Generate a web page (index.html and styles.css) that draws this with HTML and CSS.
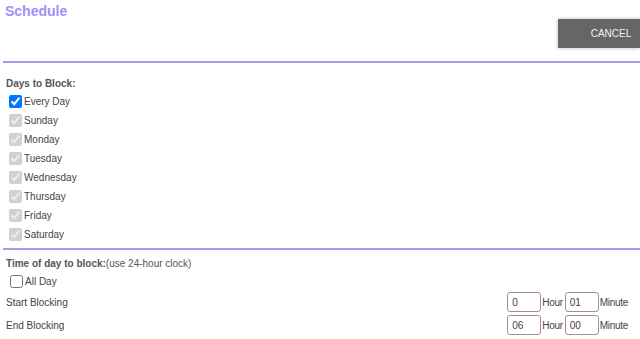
FILE: index.html
```html
<!DOCTYPE html>
<html>
<head>
<meta charset="utf-8">
<link rel="stylesheet" href="styles.css">
</head>
<body>
<div class="page">
  <div class="header">
    <h1 class="title">Schedule</h1>
    <div class="actions"><button class="cancel">CANCEL</button></div>
  </div>
  <div class="days">
    <div class="heading">Days to Block:</div>
    <label class="row"><input type="checkbox" checked><span>Every Day</span></label>
    <label class="row"><input type="checkbox" checked disabled><span>Sunday</span></label>
    <label class="row"><input type="checkbox" checked disabled><span>Monday</span></label>
    <label class="row"><input type="checkbox" checked disabled><span>Tuesday</span></label>
    <label class="row"><input type="checkbox" checked disabled><span>Wednesday</span></label>
    <label class="row"><input type="checkbox" checked disabled><span>Thursday</span></label>
    <label class="row"><input type="checkbox" checked disabled><span>Friday</span></label>
    <label class="row"><input type="checkbox" checked disabled><span>Saturday</span></label>
  </div>
  <div class="time">
    <div class="heading">Time of day to block:<span class="note">(use 24-hour clock)</span></div>
    <label class="row allday"><input type="checkbox"><span>All Day</span></label>
    <div class="trow">
      <span class="tlabel">Start Blocking</span>
      <span class="tinputs"><input class="tin" type="text" value="0"><span class="unit">Hour</span><input class="tin" type="text" value="01"><span class="unit last">Minute</span></span>
    </div>
    <div class="trow">
      <span class="tlabel">End Blocking</span>
      <span class="tinputs"><input class="tin" type="text" value="06"><span class="unit">Hour</span><input class="tin" type="text" value="00"><span class="unit last">Minute</span></span>
    </div>
  </div>
</div>
</body>
</html>
```
FILE: styles.css
```css
html, body {
  margin: 0;
  padding: 0;
  background: #fff;
}
body {
  font-family: "Liberation Sans", Arial, sans-serif;
  font-size: 10px;
  color: #444;
}
.page {
  padding-left: 3px;
  overflow: hidden;
}
.header {
  padding-top: 3px;
  padding-bottom: 13px;
  border-bottom: 2px solid #a39cf3;
}
.title {
  margin: 0;
  padding-left: 2px;
  font-size: 14px;
  line-height: 16px;
  font-weight: bold;
  color: #a090fc;
}
.actions {
  display: flex;
  justify-content: flex-end;
}
.cancel {
  height: 29px;
  width: 82px;
  margin: 0;
  border: none;
  background: #666;
  color: #f2f2f2;
  font-family: "Liberation Sans", Arial, sans-serif;
  font-size: 10px;
  padding: 0 0 0 24px;
  box-shadow: 0 0 4px rgba(0,0,0,0.28);
}
.heading {
  font-weight: bold;
  line-height: 13px;
  color: #555;
  padding-left: 3px;
}
.note {
  font-weight: normal;
}
.days {
  padding-top: 14px;
  padding-bottom: 4px;
  border-bottom: 2px solid #a39cf3;
}
.days .heading {
  margin-bottom: 2px;
}
.row {
  display: flex;
  align-items: center;
  height: 19px;
  padding-left: 2px;
}
.row input {
  width: 13px;
  height: 13px;
  margin: 0 2px 0 4px;
}
.row span {
  color: #444;
}
.time {
  padding-top: 7px;
}
.allday {
  margin-top: 3px;
  height: 17px;
}
.allday input {
  margin-left: 5px;
}
.trow {
  display: flex;
  align-items: center;
  justify-content: space-between;
  height: 22px;
  padding-right: 12px;
  margin-top: 1px;
}
.tlabel {
  padding-left: 3px;
}
.tinputs {
  display: flex;
  align-items: center;
}
.tin {
  box-sizing: border-box;
  width: 34px;
  height: 20px;
  margin: 0;
  padding: 0 4px;
  border: 1px solid #a58f8f;
  border-radius: 3px;
  font-family: "Liberation Sans", Arial, sans-serif;
  font-size: 10px;
  color: #444;
}
.unit {
  margin: 0 2px 0 1px;
  letter-spacing: -0.3px;
}
.unit.last {
  margin-right: 0;
}
```
